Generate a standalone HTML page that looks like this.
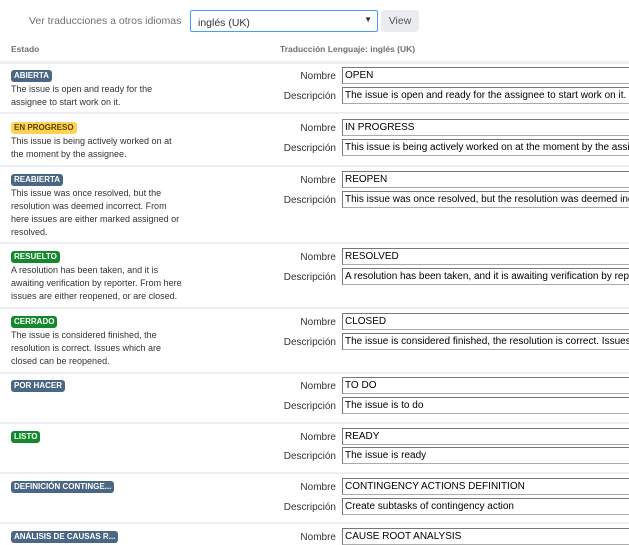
<!DOCTYPE html>
<html><head><meta charset="utf-8"><style>
*{box-sizing:border-box;margin:0;padding:0}
body{width:629px;height:541px;overflow:hidden;background:#fff;font-family:"Liberation Sans",Arial,sans-serif;color:#333;position:relative}
.a{position:absolute;white-space:nowrap}
.loz{position:absolute;left:11px;height:12px;line-height:12px;font-size:8px;font-weight:bold;color:#fff;padding:0 3px;border-radius:3px}
.b{background:#4a6785}.g{background:#14892c}.y{background:#ffd351;color:#594300}
.d{position:absolute;left:11px;font-size:9px;line-height:13px;color:#333;white-space:nowrap}
.lab{position:absolute;right:293px;font-size:10px;color:#333;white-space:nowrap;margin-top:2px}
.in{position:absolute;left:342px;width:300px;height:17px;border:1px solid #aaa;border-top-color:#777;border-left-color:#777;font-size:10px;line-height:16px;padding-left:2px;color:#000;white-space:nowrap;overflow:hidden;font-family:"Liberation Sans",Arial,sans-serif}
.sep{position:absolute;left:0;width:629px;height:2px;background:#eceef1}
</style></head><body>
<div class="a" style="left:29px;top:15px;font-size:10.5px;color:#707070">Ver traducciones a otros idiomas</div>
<div class="a" style="left:190px;top:10px;width:188px;height:22px;border:1px solid #4c9aff;border-radius:2px;font-size:10.5px;color:#333;padding:6px 0 0 7px">inglés (UK)<span style="position:absolute;right:5px;top:4px;font-size:8px">▼</span></div>
<div class="a" style="left:381px;top:10px;width:38px;height:22px;background:#ebecf0;border-radius:3px;font-size:10.5px;color:#555;text-align:center;line-height:22px">View</div>
<div class="a" style="left:11px;top:44px;font-size:8.5px;font-weight:bold;color:#707070">Estado</div>
<div class="a" style="left:280px;top:44px;font-size:8.5px;font-weight:bold;color:#707070">Traducción Lenguaje: inglés (UK)</div>
<div class="sep" style="top:61px;height:3px"></div>

<div class="loz b" style="top:70px">ABIERTA</div>
<div class="d" style="top:83px">The issue is open and ready for the<br>assignee to start work on it.</div>
<div class="lab" style="top:69px">Nombre</div><div class="in" style="top:67px">OPEN</div>
<div class="lab" style="top:89px">Descripción</div><div class="in" style="top:87px">The issue is open and ready for the assignee to start work on it.</div>
<div class="sep" style="top:112px"></div>

<div class="loz y" style="top:122px">EN PROGRESO</div>
<div class="d" style="top:135px">This issue is being actively worked on at<br>the moment by the assignee.</div>
<div class="lab" style="top:121px">Nombre</div><div class="in" style="top:119px">IN PROGRESS</div>
<div class="lab" style="top:141px">Descripción</div><div class="in" style="top:139px">This issue is being actively worked on at the moment by the assignee.</div>
<div class="sep" style="top:165px"></div>

<div class="loz b" style="top:174px">REABIERTA</div>
<div class="d" style="top:187px">This issue was once resolved, but the<br>resolution was deemed incorrect. From<br>here issues are either marked assigned or<br>resolved.</div>
<div class="lab" style="top:173px">Nombre</div><div class="in" style="top:171px">REOPEN</div>
<div class="lab" style="top:193px">Descripción</div><div class="in" style="top:191px">This issue was once resolved, but the resolution was deemed incorrect.</div>
<div class="sep" style="top:242px"></div>

<div class="loz g" style="top:251px">RESUELTO</div>
<div class="d" style="top:264px">A resolution has been taken, and it is<br>awaiting verification by reporter. From here<br>issues are either reopened, or are closed.</div>
<div class="lab" style="top:250px">Nombre</div><div class="in" style="top:248px">RESOLVED</div>
<div class="lab" style="top:270px">Descripción</div><div class="in" style="top:268px">A resolution has been taken, and it is awaiting verification by reporter.</div>
<div class="sep" style="top:307px"></div>

<div class="loz g" style="top:316px">CERRADO</div>
<div class="d" style="top:329px">The issue is considered finished, the<br>resolution is correct. Issues which are<br>closed can be reopened.</div>
<div class="lab" style="top:315px">Nombre</div><div class="in" style="top:313px">CLOSED</div>
<div class="lab" style="top:335px">Descripción</div><div class="in" style="top:333px">The issue is considered finished, the resolution is correct. Issues which</div>
<div class="sep" style="top:372px"></div>

<div class="loz b" style="top:380px">POR HACER</div>
<div class="lab" style="top:379px">Nombre</div><div class="in" style="top:377px">TO DO</div>
<div class="lab" style="top:399px">Descripción</div><div class="in" style="top:397px">The issue is to do</div>
<div class="sep" style="top:422px"></div>

<div class="loz g" style="top:431px">LISTO</div>
<div class="lab" style="top:430px">Nombre</div><div class="in" style="top:428px">READY</div>
<div class="lab" style="top:449px">Descripción</div><div class="in" style="top:447px">The issue is ready</div>
<div class="sep" style="top:472px"></div>

<div class="loz b" style="top:481px">DEFINICIÓN CONTINGE...</div>
<div class="lab" style="top:480px">Nombre</div><div class="in" style="top:478px">CONTINGENCY ACTIONS DEFINITION</div>
<div class="lab" style="top:500px">Descripción</div><div class="in" style="top:498px">Create subtasks of contingency action</div>
<div class="sep" style="top:522px"></div>

<div class="loz b" style="top:531px">ANÁLISIS DE CAUSAS R...</div>
<div class="lab" style="top:530px">Nombre</div><div class="in" style="top:528px">CAUSE ROOT ANALYSIS</div>
</body></html>
